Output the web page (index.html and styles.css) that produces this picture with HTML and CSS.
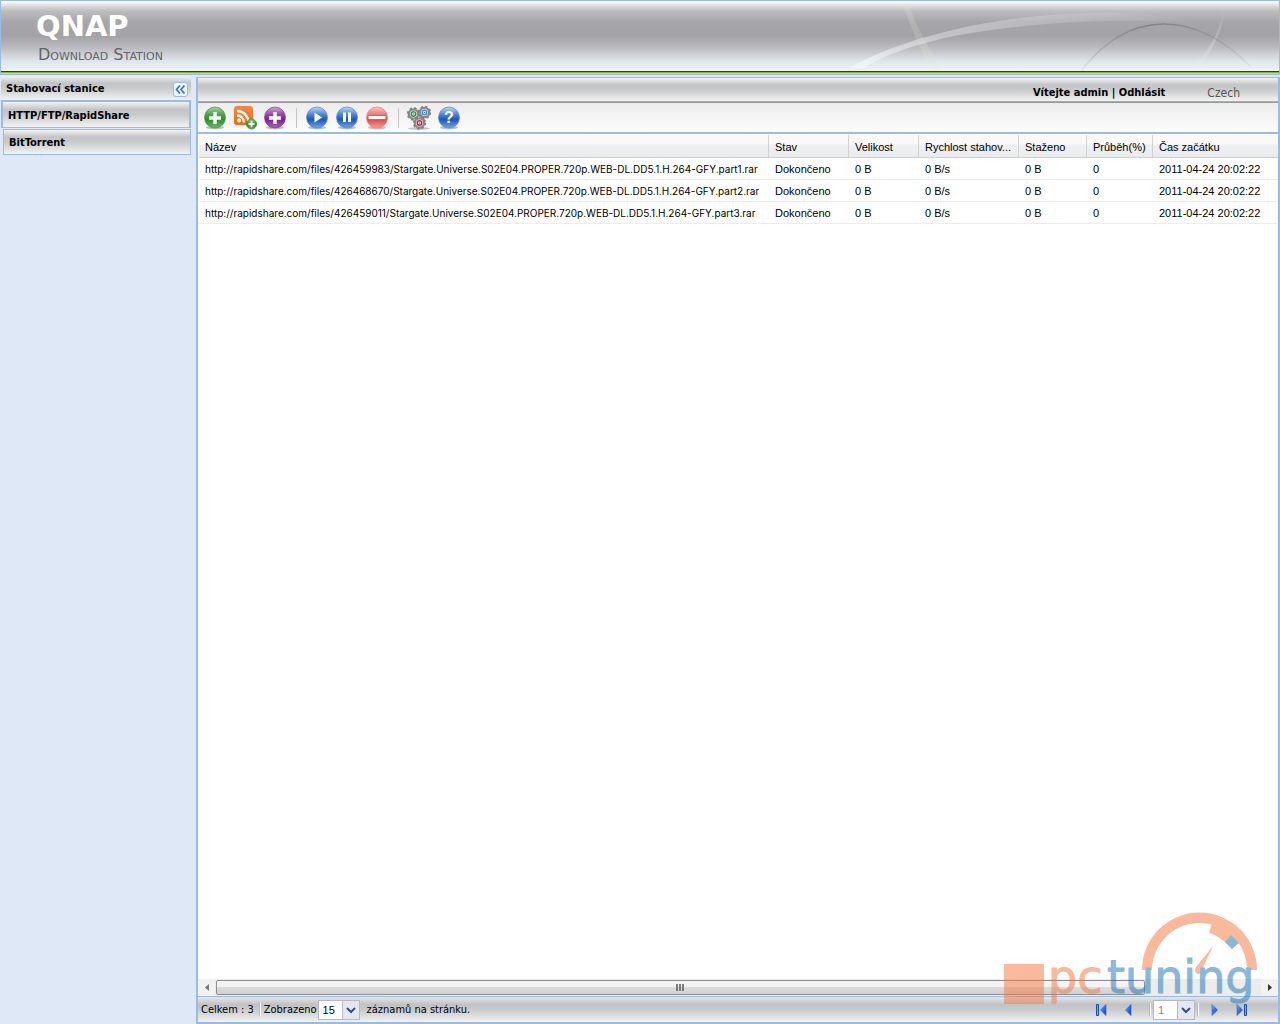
FILE: index.html
```html
<!DOCTYPE html>
<html lang="cs">
<head>
<meta charset="utf-8">
<title>QNAP Download Station</title>
<link rel="stylesheet" href="styles.css">
</head>
<body>
<svg class="defs" width="0" height="0" aria-hidden="true">
  <defs>
    <linearGradient id="green" x1="0" y1="0" x2="0" y2="1"><stop offset="0" stop-color="#a4d49c"/><stop offset=".35" stop-color="#4da548"/><stop offset=".6" stop-color="#2d8f2b"/><stop offset="1" stop-color="#6fb95c"/></linearGradient>
    <linearGradient id="purple" x1="0" y1="0" x2="0" y2="1"><stop offset="0" stop-color="#d6a5dc"/><stop offset=".35" stop-color="#9a47a8"/><stop offset=".6" stop-color="#7d2290"/><stop offset="1" stop-color="#a95fb4"/></linearGradient>
    <linearGradient id="blue" x1="0" y1="0" x2="0" y2="1"><stop offset="0" stop-color="#c3d9f4"/><stop offset=".35" stop-color="#4f87d3"/><stop offset=".6" stop-color="#1e57b5"/><stop offset="1" stop-color="#69a7ec"/></linearGradient>
    <linearGradient id="red" x1="0" y1="0" x2="0" y2="1"><stop offset="0" stop-color="#f9c6c3"/><stop offset=".4" stop-color="#ee6f6c"/><stop offset=".6" stop-color="#e24a48"/><stop offset="1" stop-color="#f79b94"/></linearGradient>
    <linearGradient id="orange" x1="0" y1="0" x2="0" y2="1"><stop offset="0" stop-color="#f08a4a"/><stop offset="1" stop-color="#f4660c"/></linearGradient>
    <linearGradient id="arrow" x1="0" y1="0" x2="1" y2="1"><stop offset="0" stop-color="#7fb4ff"/><stop offset=".5" stop-color="#2f6fe0"/><stop offset="1" stop-color="#0d3da8"/></linearGradient>
    <linearGradient id="arc" x1="0" y1="0" x2="1" y2="0"><stop offset="0" stop-color="#fff" stop-opacity=".5"/><stop offset=".5" stop-color="#fff" stop-opacity=".22"/><stop offset="1" stop-color="#fff" stop-opacity="0"/></linearGradient>
    <linearGradient id="dark" x1="0" y1="0" x2="1" y2="0"><stop offset="0" stop-color="#808088" stop-opacity=".1"/><stop offset=".4" stop-color="#77777f" stop-opacity=".8"/><stop offset="1" stop-color="#808088" stop-opacity=".1"/></linearGradient>
    <g id="gear">
      <circle r="5.800" fill="#8b8885"/>
      <circle r="6" fill="none" stroke="#7f7c7a" stroke-width="1.400" stroke-dasharray="2.400 2.310"/>
      <circle r="3.400" fill="#fff"/>
      <circle r=".8" fill="#666"/>
    </g>
  </defs>
</svg>

<header class="banner">
  <div class="brand">
    <h1 class="logo">QNAP</h1>
    <p class="product">Download Station</p>
  </div>
  <svg class="swoosh" width="480" height="70" viewBox="0 0 480 70" aria-hidden="true">
    <path d="M50 67C110 34 200 14 290 12C340 11 370 15 400 22C310 16 230 22 160 34C115 43 80 56 65 67Z" fill="url(#arc)"/>
    <path d="M104 4C111 25 122 50 132 68H143C128 46 117 24 110 4Z" fill="#e4e4d8" opacity=".22"/>
    <path d="M425 10C420 32 410 50 392 68H398C413 52 422 34 425 10Z" fill="#f0f0e4" opacity=".25"/>
    <path d="M282 70C330 8 395 8 452 66" fill="none" stroke="url(#dark)" stroke-width="1.600"/>
  </svg>
</header>

<div class="workspace">
  <nav class="sidebar" aria-label="Stahovací stanice">
    <div class="side-title">
      <h2>Stahovací stanice</h2>
      <button class="collapse" aria-label="Sbalit">
        <svg width="11" height="9" viewBox="0 0 11 9"><path d="M5 .5L1.500 4.500L5 8.500M9.500 .5L6 4.500L9.500 8.500" fill="none" stroke="#3e74b8" stroke-width="1.700"/></svg>
      </button>
    </div>
    <a class="side-item active" href="#http">HTTP/FTP/RapidShare</a>
    <a class="side-item" href="#bt">BitTorrent</a>
  </nav>

  <main class="panel">
    <div class="userbar">
      <span class="welcome">Vítejte admin | <a href="#logout">Odhlásit</a></span>
      <a class="language" href="#language">Czech</a>
    </div>

    <div class="toolbar">
      <button aria-label="Přidat úlohu"><svg width="24" height="24" viewBox="0 0 24 24"><ellipse cx="12" cy="21.500" rx="9" ry="1.800" fill="#b9bcc0"/><circle cx="12" cy="11.500" r="10.500" fill="url(#green)" stroke="#347f35" stroke-width=".6"/><path d="M12 6V18M6 12H18" stroke="#fff" stroke-width="3.400"/></svg></button>
      <button aria-label="Přidat RSS"><svg width="24" height="24" viewBox="0 0 24 24"><rect x="1" y="0" width="19" height="19" rx="3" fill="url(#orange)"/><circle cx="6" cy="14.500" r="2" fill="#fff"/><path d="M4 9.500A7 7 0 0 1 11 16.500M4 5A11.500 11.500 0 0 1 15.500 16.500" fill="none" stroke="#fff" stroke-width="2.300"/><circle cx="18.500" cy="18" r="5" fill="url(#green)" stroke="#347f35" stroke-width=".8"/><path d="M18.500 15V21M15.500 18H21.500" stroke="#fff" stroke-width="1.800"/></svg></button>
      <button aria-label="Přidat torrent"><svg width="24" height="24" viewBox="0 0 24 24"><ellipse cx="12" cy="21.500" rx="9" ry="1.800" fill="#b9bcc0"/><circle cx="12" cy="11.500" r="10.500" fill="url(#purple)" stroke="#762285" stroke-width=".6"/><path d="M12 6V18M6 12H18" stroke="#fff" stroke-width="3.400"/></svg></button>
      <span class="divider"></span>
      <button aria-label="Spustit"><svg width="24" height="24" viewBox="0 0 24 24"><ellipse cx="12" cy="21.500" rx="9" ry="1.800" fill="#b9bcc0"/><circle cx="12" cy="11.500" r="10.500" fill="url(#blue)" stroke="#5581c4" stroke-width=".7"/><path d="M9.500 6.500L17 11.500L9.500 16.500Z" fill="#fff"/></svg></button>
      <button aria-label="Pozastavit"><svg width="24" height="24" viewBox="0 0 24 24"><ellipse cx="12" cy="21.500" rx="9" ry="1.800" fill="#b9bcc0"/><circle cx="12" cy="11.500" r="10.500" fill="url(#blue)" stroke="#5581c4" stroke-width=".7"/><path d="M9.500 6.500V16M14.500 6.500V16" stroke="#fff" stroke-width="3"/></svg></button>
      <button aria-label="Odstranit"><svg width="24" height="24" viewBox="0 0 24 24"><ellipse cx="12" cy="21.500" rx="9" ry="1.800" fill="#c9b9ba"/><circle cx="12" cy="11.500" r="10.500" fill="url(#red)" stroke="#e37874" stroke-width=".7"/><path d="M3.500 11.500H20.500" stroke="#d34" stroke-width="5"/><path d="M3.500 11.500H20.500" stroke="#fff" stroke-width="3.400"/></svg></button>
      <span class="divider"></span>
      <button aria-label="Nastavení"><svg width="24" height="24" viewBox="0 0 24 24"><ellipse cx="12" cy="22.500" rx="11" ry="1.500" fill="#c5c5c5"/><use href="#gear" x="6.500" y="8"/><use href="#gear" x="17.500" y="6.500"/><use href="#gear" x="12.500" y="17"/><circle cx="6.500" cy="8" r="2.200" fill="none" stroke="#1f9a55" stroke-width="1.500"/><circle cx="17.500" cy="6.500" r="2.200" fill="none" stroke="#3a8edc" stroke-width="1.500"/><circle cx="12.500" cy="17" r="2.200" fill="none" stroke="#cf1b4c" stroke-width="1.500"/></svg></button>
      <button aria-label="Nápověda"><svg width="24" height="24" viewBox="0 0 24 24"><ellipse cx="12" cy="21.500" rx="9" ry="1.800" fill="#b9bcc0"/><circle cx="12" cy="11.500" r="10.500" fill="url(#blue)" stroke="#5581c4" stroke-width=".7"/><text class="help-mark" x="12" y="17" text-anchor="middle">?</text></svg></button>
    </div>

    <div class="grid">
      <table>
        <colgroup><col class="c-name"><col class="c-state"><col class="c-size"><col class="c-speed"><col class="c-done"><col class="c-pct"><col></colgroup>
        <thead>
          <tr><th>Název</th><th>Stav</th><th>Velikost</th><th>Rychlost stahov...</th><th>Staženo</th><th>Průběh(%)</th><th>Čas začátku</th></tr>
        </thead>
        <tbody>
          <tr><td class="file">http://rapidshare.com/files/426459983/Stargate.Universe.S02E04.PROPER.720p.WEB-DL.DD5.1.H.264-GFY.part1.rar</td><td>Dokončeno</td><td>0 B</td><td>0 B/s</td><td>0 B</td><td>0</td><td>2011-04-24 20:02:22</td></tr>
          <tr><td class="file">http://rapidshare.com/files/426468670/Stargate.Universe.S02E04.PROPER.720p.WEB-DL.DD5.1.H.264-GFY.part2.rar</td><td>Dokončeno</td><td>0 B</td><td>0 B/s</td><td>0 B</td><td>0</td><td>2011-04-24 20:02:22</td></tr>
          <tr><td class="file">http://rapidshare.com/files/426459011/Stargate.Universe.S02E04.PROPER.720p.WEB-DL.DD5.1.H.264-GFY.part3.rar</td><td>Dokončeno</td><td>0 B</td><td>0 B/s</td><td>0 B</td><td>0</td><td>2011-04-24 20:02:22</td></tr>
        </tbody>
      </table>
    </div>

    <div class="scroller">
      <button class="scroll-arrow" aria-label="Posunout vlevo"><svg width="4" height="7" viewBox="0 0 4 7"><path d="M4 0V7L0 3.500Z" fill="#777"/></svg></button>
      <div class="scroll-track">
        <div class="scroll-thumb"><svg width="9" height="7" viewBox="0 0 9 7"><path d="M1 0V7M4 0V7M7 0V7" stroke="#555" stroke-width="1.500"/></svg></div>
      </div>
      <button class="scroll-arrow" aria-label="Posunout vpravo"><svg width="4" height="7" viewBox="0 0 4 7"><path d="M0 0V7L4 3.500Z" fill="#333"/></svg></button>
    </div>

    <footer class="pager">
      <span>Celkem : 3</span>
      <span class="sep"></span>
      <label for="per-page">Zobrazeno</label>
      <select id="per-page"><option>15</option><option>30</option></select>
      <span class="records">záznamů na stránku.</span>
      <div class="pages">
        <button aria-label="První stránka"><svg width="11" height="12" viewBox="0 0 11 12"><path d="M.5 .5H2.500V11.500H.5Z" fill="#6ea4f4" stroke="#1c4fb5"/><path d="M10 .5V11.500L4.500 6Z" fill="url(#arrow)" stroke="#2860c8" stroke-width=".6"/></svg></button>
        <button aria-label="Předchozí stránka"><svg width="11" height="12" viewBox="0 0 11 12"><path d="M8 .5V11.500L2.500 6Z" fill="url(#arrow)" stroke="#2860c8" stroke-width=".6"/></svg></button>
        <span class="sep"></span>
        <select class="page-no" aria-label="Stránka"><option>1</option></select>
        <span class="sep"></span>
        <button aria-label="Další stránka"><svg width="11" height="12" viewBox="0 0 11 12"><path d="M3 .5V11.500L8.500 6Z" fill="url(#arrow)" stroke="#2860c8" stroke-width=".6"/></svg></button>
        <button aria-label="Poslední stránka"><svg width="11" height="12" viewBox="0 0 11 12"><path d="M1 .5V11.500L6.500 6Z" fill="url(#arrow)" stroke="#2860c8" stroke-width=".6"/><path d="M8.500 .5H10.500V11.500H8.500Z" fill="#6ea4f4" stroke="#1c4fb5"/></svg></button>
      </div>
    </footer>
  </main>
</div>

<svg class="watermark" width="262" height="98" viewBox="0 0 262 98" role="img" aria-label="pctuning">
  <g fill="#f47a43">
    <rect x="0" y="52" width="40" height="40"/>
    <path d="M138 58A57.500 57.500 0 0 1 253 58H243A47.500 47.500 0 0 0 234 30L228 37L221 30A45 45 0 0 0 205 21L207.500 12.500A47.500 47.500 0 0 0 148 58Z"/>
    <path d="M209 34L192.500 54.500L198 58Z"/>
    <circle cx="195" cy="58" r="4"/>
    <text class="mark-text warm" x="44" y="81">pc</text>
  </g>
  <g fill="#2376b7">
    <path d="M227 23L235 31L228 37L221 30Z"/>
    <text class="mark-text cool" x="103" y="81">tuning</text>
  </g>
</svg>
</body>
</html>
```
FILE: styles.css
```css
* { box-sizing: border-box; }

body {
  margin: 0;
  min-height: 100vh;
  display: flex;
  flex-direction: column;
  position: relative;
  background: #dfe8f6;
  color: #000;
  font: 11px/14px "DejaVu Sans Condensed", "Noto Sans", sans-serif;
}

button {
  display: flex;
  align-items: center;
  justify-content: center;
  padding: 0;
  border: 0;
  background: none;
  cursor: pointer;
}

a { color: inherit; text-decoration: none; }
.defs { position: absolute; }

/* Banner */
.banner {
  height: 75px;
  display: flex;
  justify-content: space-between;
  border: 1px solid #99bbe8;
  background:
    linear-gradient(#2c4026 0 1px, #92b020 1px 2px, #c4d98a 2px 3px) bottom / 100% 3px no-repeat,
    linear-gradient(#fff 0, #e2e2e0 4px, #bdbdbf 10px, #a6a5aa 21px, #a3a2a7 35px, #bcbcc0 47px, #dfe5ea 60px, #edf4fa 70px);
}
.brand { padding: 9px 0 0 35px; }
.logo {
  margin: 0;
  color: #fff;
  font: bold 29px/32px "DejaVu Sans", sans-serif;
}
.product {
  margin: 5px 0 0 2px;
  color: #626268;
  font: small-caps 16px/16px "DejaVu Sans", sans-serif;
}

/* Layout */
.workspace { flex: 1; display: flex; gap: 5px; }
.sidebar { width: 191px; padding: 1px 0 0 1px; }
.panel {
  flex: 1;
  min-width: 0;
  display: flex;
  flex-direction: column;
  margin-top: 2px;
  border: 1px solid #99bbe8;
  border-width: 1px 2px 2px;
  background: #fff;
}

.side-title, .side-item, .userbar {
  background: linear-gradient(#f2f3f3, #c2c4c6 30%, #c8cacb 50%, #f1f2f1);
}
.side-title {
  height: 24px;
  display: flex;
  align-items: center;
  justify-content: space-between;
  padding: 2px 3px 0 5px;
}
.side-title h2 { margin: 0; font-size: 11px; }
.collapse {
  width: 15px;
  height: 15px;
  border: 1px solid #99bbe8;
  border-radius: 3px;
  background: #f0f6fd;
}
.side-item {
  height: 26px;
  display: flex;
  align-items: center;
  margin: 1px 0 0 2px;
  padding: 2px 0 0 5px;
  border: 1px solid #99bbe8;
  font-weight: bold;
}
.side-item.active { height: 28px; margin: 0; border-width: 2px 2px 1px; }

.userbar {
  height: 24px;
  display: flex;
  align-items: center;
  justify-content: flex-end;
  gap: 42px;
  padding: 6px 38px 0 0;
  border-bottom: 1px solid #8fb0dc;
}
.welcome { font-weight: bold; }
.language { color: #555; font-size: 12px; }

.toolbar {
  height: 32px;
  display: flex;
  align-items: center;
  gap: 6px;
  padding: 0 5px;
  border-top: 1px solid #999;
  border-bottom: 2px solid #99bbe8;
  background: linear-gradient(#ececec, #fbfcfd);
}
.divider { width: 1px; height: 20px; margin: 0 2px 0 3px; background: #c4c4c4; }
.help-mark { fill: #fff; font: bold 16px "Liberation Sans", sans-serif; }

/* Download list */
.grid { flex: 1; padding: 1px 0 0 1px; }
table {
  width: 100%;
  table-layout: fixed;
  border-collapse: separate;
  border-spacing: 0;
  font: 11px/14px "Liberation Sans", sans-serif;
}
.c-name { width: 570px; }
.c-state { width: 80px; }
.c-size { width: 70px; }
.c-speed { width: 100px; }
.c-done { width: 68px; }
.c-pct { width: 66px; }
th, td {
  height: 22px;
  padding: 0 0 0 6px;
  border-bottom: 1px solid #ededed;
  font-weight: normal;
  text-align: left;
  white-space: nowrap;
  overflow: hidden;
  text-overflow: ellipsis;
}
.file { font: 10px/14px Inter, "Liberation Sans", sans-serif; }
th {
  height: 23px;
  padding-top: 2px;
  border-right: 1px solid #d0d0d0;
  border-bottom-color: #d0d0d0;
  background: linear-gradient(#f9f9f9 0 40%, #eff0f1 45%, #e9ebed);
}
th:last-child { border-right: 0; }

/* Horizontal scrollbar */
.scroller {
  height: 17px;
  display: flex;
  background: #ececec;
}
.scroll-arrow { width: 17px; height: 17px; background: #f1f1f1; }
.scroll-track { flex: 1; padding: 1px; }
.scroll-thumb {
  width: 89%;
  height: 15px;
  display: flex;
  align-items: center;
  justify-content: center;
  border: 1px solid #8f8f8f;
  border-radius: 2px;
  background: linear-gradient(#f3f3f3 0 45%, #dcdcdc 50%, #cfcfcf);
}

/* Paging bar */
.pager {
  height: 26px;
  display: flex;
  align-items: center;
  padding: 0 23px 0 3px;
  border-top: 1px solid #99bbe8;
  background: linear-gradient(#e6e7e7, #c0c2c4 30%, #c8cacb 50%, #f1f2f1);
}
.sep { width: 2px; height: 13px; margin: 0 3px 0 5px; border-left: 1px solid #98c0f4; border-right: 1px solid #fff; }
select {
  appearance: none;
  width: 42px;
  height: 20px;
  margin: 0 7px 0 1px;
  padding: 0 0 0 4px;
  border: 1px solid #b5b8c8;
  border-radius: 0;
  color: #000;
  font: 11px "Liberation Sans", sans-serif;
  background: #fff url("data:image/svg+xml,%3Csvg xmlns='http://www.w3.org/2000/svg' width='17' height='18'%3E%3Crect width='17' height='18' fill='%23e4e8ee'/%3E%3Cpath d='M.5 0V18' stroke='%23b5b8c8'/%3E%3Cpath d='M5 7L9 11L13 7' fill='none' stroke='%23344d85' stroke-width='2'/%3E%3C/svg%3E") right center no-repeat;
}
.pages { display: flex; align-items: center; margin-left: auto; }
.pages button { width: 27px; height: 20px; }
.pages .sep { margin: 0 2px 0 7px; }
.pages .page-no { margin: 0; color: #888; }
.pages .page-no + .sep { margin-left: 2px; }

/* Site mark laid over the lower right corner */
.watermark {
  position: absolute;
  right: 14px;
  bottom: 14px;
  overflow: visible;
  opacity: .52;
  pointer-events: none;
}
.mark-text { font: 46px "DejaVu Sans", sans-serif; stroke-width: 1px; }
.warm { stroke: #f47a43; }
.cool { stroke: #2376b7; }
```
